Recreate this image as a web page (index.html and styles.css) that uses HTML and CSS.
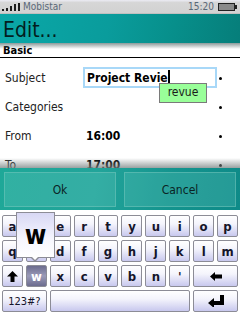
FILE: index.html
```html
<!DOCTYPE html>
<html lang="en">
<head>
    <meta charset="UTF-8">
    <meta name="viewport" content="width=device-width, initial-scale=1.0">
    <title>Edit...</title>
    <link rel="stylesheet" href="styles.css">
</head>
<body>
    <div class="status">
        <svg class="signal" width="18" height="8" viewBox="0 0 18 8">
            <rect x="0" y="6" width="2" height="2"/>
            <rect x="4" y="5" width="2" height="3"/>
            <rect x="8" y="3" width="2" height="5"/>
            <rect x="12" y="1" width="2" height="7"/>
            <rect x="16" y="0" width="2" height="8"/>
        </svg>
        <span class="carrier">Mobistar</span>
        <span class="time">15:20</span>
        <svg class="battery" width="20" height="8" viewBox="0 0 20 8">
            <rect x="0.5" y="0.5" width="16" height="7" fill="#8a8a8a" stroke="#222"/>
            <rect x="17" y="2" width="2" height="4" fill="#222"/>
        </svg>
    </div>

    <div class="titlebar">
        <h1>Edit...</h1>
    </div>

    <div class="content">
        <div class="section">Basic</div>
        <div class="rows">
            <div class="row">
                <span class="label">Subject</span>
                <div class="value textbox">
                    Project Revie<span class="caret"></span>
                    <div class="suggest">revue</div>
                </div>
                <span class="dot"></span>
            </div>
            <div class="row">
                <span class="label">Categories</span>
                <span class="value"></span>
                <span class="dot"></span>
            </div>
            <div class="row">
                <span class="label">From</span>
                <span class="value bold">16:00</span>
                <span class="dot"></span>
            </div>
            <div class="row">
                <span class="label">To</span>
                <span class="value bold">17:00</span>
                <span class="dot"></span>
            </div>
        </div>
    </div>

    <div class="actions">
        <button>Ok</button>
        <button>Cancel</button>
    </div>

    <div class="keyboard">
        <div class="keys">
            <span class="key">a</span><span class="key">z</span><span class="key">e</span><span class="key">r</span><span class="key">t</span>
            <span class="key">y</span><span class="key">u</span><span class="key">i</span><span class="key">o</span><span class="key">p</span>

            <span class="key">q</span><span class="key">s</span><span class="key">d</span><span class="key">f</span><span class="key">g</span>
            <span class="key">h</span><span class="key">j</span><span class="key">k</span><span class="key">l</span><span class="key">m</span>

            <span class="key">
                <svg width="11" height="11" viewBox="0 0 11 11"><path d="M5.5 0 L11 5.5 H7.5 V11 H3.5 V5.5 H0 Z" fill="#000"/></svg>
            </span>
            <span class="key pressed">w</span><span class="key">x</span><span class="key">c</span><span class="key">v</span>
            <span class="key">b</span><span class="key">n</span><span class="key">'</span>
            <span class="key wide">
                <svg width="12" height="9" viewBox="0 0 12 9"><path d="M0 4.5 L5 0 V2.5 H12 V6.5 H5 V9 Z" fill="#000"/></svg>
            </span>

            <span class="key wide small">123#?</span>
            <span class="key space"></span>
            <span class="key wide">
                <svg width="16" height="12" viewBox="0 0 16 12"><path d="M0 8 L6 3 V6 H12 V0 H16 V10 H6 V13 Z" fill="#000"/></svg>
            </span>
        </div>
        <div class="popup">w</div>
    </div>
</body>
</html>
```

FILE: styles.css
```css
body {
    margin: 0;
    width: 240px;
    height: 320px;
    overflow: hidden;
    font-family: 'DejaVu Sans Condensed', 'Liberation Sans', sans-serif;
    background: #fff;
    color: #1a1a1a;
}
.status {
    height: 13px;
    display: flex;
    align-items: center;
    padding: 0 2px;
    background: linear-gradient(#ececf4, #d6d6d6 20%, #d2d2d2);
    border-bottom: 1px solid #c0c0c0;
    font-size: 10px;
    color: #5a6878;
}
.signal {
    fill: #1c1c1c;
    margin-top: 1px;
}
.carrier {
    margin-left: 3px;
}
.time {
    margin-left: auto;
    margin-right: 4px;
}
.titlebar {
    position: relative;
    height: 29px;
    background: linear-gradient(100deg, #0aa8a8 0%, #0a9c9c 45%, #07908c 70%, #067e7a 100%);
}
.titlebar::after {
    content: "";
    position: absolute;
    left: 0;
    right: 0;
    top: 100%;
    height: 6px;
    background: linear-gradient(rgba(90,110,110,0.7), rgba(255,255,255,0));
}
.titlebar h1 {
    margin: 0;
    padding: 3px 0 0 3px;
    font-weight: normal;
    font-size: 21px;
    line-height: 26px;
    color: #031e1e;
}
.content {
    height: 125px;
    overflow: hidden;
}
.section {
    height: 13px;
    padding: 1px 0 0 3px;
    font-weight: bold;
    font-size: 11px;
    line-height: 13px;
    color: #000;
    border-bottom: 1px solid #000;
}
.rows {
    padding-top: 5px;
}
.row {
    height: 29px;
    display: flex;
    align-items: center;
    font-size: 12px;
}
.label {
    width: 78px;
    padding-left: 5px;
    color: #222;
}
.value {
    width: 131px;
    padding-left: 3px;
}
.bold {
    font-weight: bold;
    color: #000;
}
.textbox {
    position: relative;
    box-sizing: border-box;
    width: 134px;
    height: 21px;
    border: 2px solid #a8d8f8;
    padding-left: 2px;
    display: flex;
    align-items: center;
    font-weight: bold;
    font-size: 12px;
    color: #000;
}
.caret {
    width: 2px;
    height: 15px;
    background: #000;
}
.suggest {
    position: absolute;
    left: 74px;
    top: 14px;
    box-sizing: border-box;
    width: 48px;
    height: 20px;
    background: #99ff99;
    border: 1px solid #7a7a7a;
    font-weight: normal;
    font-size: 12px;
    line-height: 17px;
    text-align: center;
    color: #1a1a1a;
}
.dot {
    width: 3px;
    height: 3px;
    border-radius: 50%;
    background: #000;
    margin-left: 2px;
    margin-top: 2px;
}
.actions {
    position: relative;
    height: 42px;
    box-sizing: border-box;
    padding: 4px 4px 0;
    display: grid;
    grid-template-columns: 1fr 1fr;
    column-gap: 8px;
    align-items: start;
    background: linear-gradient(100deg, #1ea898 0%, #22a49a 40%, #14948e 70%, #0e8a88 100%);
}
.actions::before {
    content: "";
    position: absolute;
    left: 0;
    right: 0;
    bottom: 100%;
    height: 10px;
    background: linear-gradient(rgba(200,200,200,0), rgba(120,130,130,0.75));
}
.actions button {
    height: 35px;
    border: 1px solid rgba(120,200,190,0.5);
    background: rgba(120,210,200,0.22);
    font-family: inherit;
    font-size: 12px;
    color: #0a2424;
    padding: 0;
}
.keyboard {
    position: relative;
    height: 110px;
    box-sizing: border-box;
    padding: 5px 2px 0;
    background: #fff;
}
.keys {
    display: grid;
    grid-template-columns: repeat(10, 1fr);
    grid-auto-rows: 22px;
    gap: 3px 3px;
}
.key {
    display: flex;
    align-items: center;
    justify-content: center;
    border: 1px solid #8c8c96;
    border-radius: 2px;
    background: linear-gradient(#ffffff 0%, #f4f4fc 40%, #c8c8ee 100%);
    font-weight: bold;
    font-size: 13px;
    color: #15152a;
}
.key.wide {
    grid-column: span 2;
}
.key.space {
    grid-column: span 6;
}
.key.small {
    font-weight: normal;
    font-size: 11px;
}
.key.pressed {
    background: linear-gradient(#6c6c8e 0%, #9a9ab8 50%, #6c6c8e 100%);
    color: #fff;
}
.popup {
    position: absolute;
    left: 16px;
    top: 2px;
    box-sizing: border-box;
    width: 39px;
    height: 46px;
    border: 1px solid #8c8c96;
    background: linear-gradient(#d8d8f4, #f6f6fe 60%, #ffffff);
    font-weight: bold;
    font-size: 26px;
    line-height: 44px;
    text-align: center;
    color: #000;
}
.popup::before,
.popup::after {
    content: "";
    position: absolute;
    top: 100%;
    border: 5px solid transparent;
}
.popup::before {
    left: 13px;
    border-top-color: #8c8c96;
}
.popup::after {
    left: 14px;
    margin-top: -1px;
    border-width: 4px;
    border-top-color: #fff;
}
```
